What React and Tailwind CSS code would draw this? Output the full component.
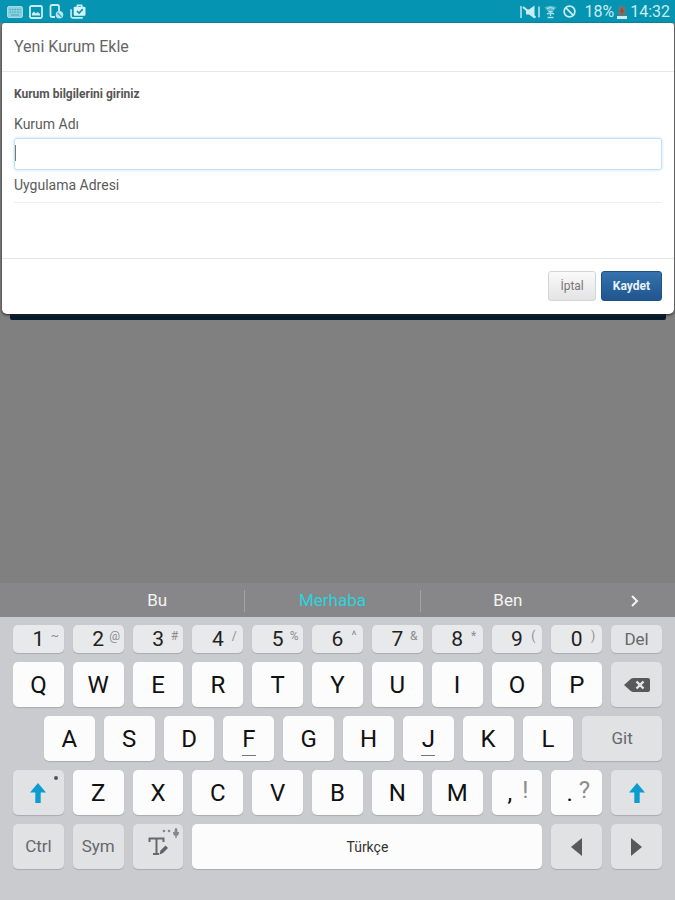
import React from "react";

const KEY_SHADOW = "shadow-[0_1px_1px_#a9abaf]";
const LETTER = `relative flex h-[45px] min-w-0 items-center justify-center rounded-[5px] bg-[#fcfcfc] text-2xl text-[#111] ${KEY_SHADOW}`;
const SPECIAL = `relative flex h-[45px] min-w-0 items-center justify-center rounded-[5px] bg-[#e0e2e4] text-[#66686b] ${KEY_SHADOW}`;
const ROW = "grid grid-cols-11 gap-[9px]";

const NUMBERS = [
  ["1", "~"], ["2", "@"], ["3", "#"], ["4", "/"], ["5", "%"],
  ["6", "^"], ["7", "&"], ["8", "*"], ["9", "("], ["0", ")"],
];

function StatusBar() {
  return (
    <header className="flex h-[23px] shrink-0 items-center justify-between bg-[#0594b2] pr-[5px] pl-[7px] text-[#c9edf3]">
      <div className="flex items-center gap-[6px]">
        <svg width="16" height="12" viewBox="0 0 16 12" aria-hidden="true">
          <rect x="0.5" y="0.5" width="15" height="11" rx="1.5" fill="#8bcfdd" stroke="#a5dbe6" />
          <path d="M2.5 3.5h11M2.5 6h11" stroke="#3ba9c0" strokeDasharray="1.5 1" />
          <path d="M4 9h8" stroke="#3ba9c0" />
        </svg>
        <svg width="14" height="14" viewBox="0 0 14 14" fill="none" aria-hidden="true">
          <rect x="1" y="1" width="12" height="12" rx="1.5" stroke="currentColor" strokeWidth="1.8" />
          <path d="M3 10.5V8.5l2-2 2 2 1.5-1.5L11 8.8v1.7z" fill="currentColor" />
        </svg>
        <svg width="15" height="15" viewBox="0 0 15 15" fill="none" aria-hidden="true">
          <path d="M6 13H3a1.500 1.500 0 0 1-1.500-1.500v-9A1.500 1.500 0 0 1 3 1h5.500A1.500 1.500 0 0 1 10 2.500V7" stroke="currentColor" strokeWidth="1.800" />
          <circle cx="10.500" cy="10.800" r="3.800" fill="#b5e6ee" />
          <path d="M8.500 8.800l4 4" stroke="#2a9fb8" strokeWidth="1.200" />
        </svg>
        <svg width="16" height="15" viewBox="0 0 15 14" fill="none" aria-hidden="true">
          <path d="M1 5v6.500A1.500 1.500 0 0 0 2.500 13H12" stroke="currentColor" strokeWidth="1.500" />
          <path d="M7 3V1.200h4V3" stroke="currentColor" strokeWidth="1.500" />
          <rect x="3.500" y="2.500" width="11" height="8.500" rx="1" fill="#d6f5f8" />
          <path d="M6.500 6.500l2 2 3.500-3.700" stroke="#0594b2" strokeWidth="1.500" />
        </svg>
      </div>
      <div className="flex items-center text-base leading-[23px]">
        <svg className="mr-[4px]" width="20" height="14" viewBox="0 0 20 14" fill="none" aria-hidden="true">
          <path d="M1 1v12M19 1.500v11" stroke="currentColor" strokeWidth="1.400" />
          <path d="M6 4.500h3l5.500-4v13L9 9.500H6z" fill="currentColor" />
          <path d="M3 2l12.500 10.500" stroke="currentColor" strokeWidth="2" />
        </svg>
        <svg className="mr-[6px]" width="13" height="14" viewBox="0 0 13 14" fill="none" aria-hidden="true">
          <path d="M.5 2.500Q6.500-1 12.500 2.500L8.500 7h-4z" fill="#5cbacd" />
          <path d="M3 3.500Q6.500 1.500 10 3.500M4.500 6.500h4" stroke="#b4e3ec" />
          <path d="M6.500 6v5M3 9l3.500-1.500L10 9M3.500 12.500h6" stroke="#a9dfe8" strokeWidth="1.500" />
        </svg>
        <svg className="mr-[8px]" width="13" height="13" viewBox="0 0 13 13" fill="none" stroke="currentColor" strokeWidth="1.700" aria-hidden="true">
          <circle cx="6.500" cy="6.500" r="5.400" />
          <path d="M2.700 2.700l7.600 7.600" />
        </svg>
        <span>18%</span>
        <svg className="mx-[3px]" width="10" height="14" viewBox="0 0 10 14" aria-hidden="true">
          <path d="M3.500 0h3v2H9v9H1V2h2.500z" fill="#557f86" />
          <path d="M5.500 1.500L2.500 7h2l-1 4L8 5.500H6z" fill="#b5431e" />
          <path d="M0 11h10v3H0z" fill="#c9edf3" />
        </svg>
        <span>14:32</span>
      </div>
    </header>
  );
}

function Dialog() {
  return (
    <section role="dialog" aria-labelledby="dialog-title" className="ml-[2px] mr-px">
      <form onSubmit={(e) => e.preventDefault()} className="relative rounded-b-[5px] rounded-t-[3px] bg-white text-[#5c5c5c] shadow-[0_1px_3px_#222]">
        <h1 id="dialog-title" className="border-b border-[#e8e8e8] px-3 pt-3 pb-3 text-base leading-6 text-[#666]">
          Yeni Kurum Ekle
        </h1>
        <div className="flex flex-col px-3 pt-3">
          <h2 className="text-xs leading-5 font-bold text-[#555]">Kurum bilgilerini giriniz</h2>
          <label htmlFor="name" className="mt-[10px] text-sm leading-5">Kurum Adı</label>
          <div className="relative mt-1">
            <input id="name" className="block h-8 w-full rounded-[3px] border border-[#c3e1f3] px-1 shadow-[0_0_3px_#b5dcf5] outline-none" />
            <span className="absolute top-[7px] left-px h-4 w-px bg-[#777]" />
          </div>
          <label htmlFor="address" className="mt-[5px] text-sm leading-5">Uygulama Adresi</label>
          <input id="address" className="mt-[7px] h-14 w-full border-t border-[#eee] outline-none" />
        </div>
        <footer className="flex justify-end gap-[5px] border-t border-[#e5e5e5] px-3 pt-3 pb-[13px] text-xs">
          <button type="button" className="h-[30px] rounded-[3px] border border-[#d5d5d5] bg-linear-to-b from-[#fafafa] to-[#e3e3e3] px-[11px] text-[#777]">
            İptal
          </button>
          <button type="submit" className="h-[30px] rounded-[3px] border border-[#1f5288] bg-linear-to-b from-[#3473ae] to-[#20558d] px-[11px] font-bold text-[#e8f1fa]">
            Kaydet
          </button>
        </footer>
      </form>
      <div className="mx-2 h-[6px] rounded-b-[2px] bg-[#07192c]" />
    </section>
  );
}

function Letter({ children, grow = false }) {
  const marked = children === "F" || children === "J";
  return (
    <button type="button" className={`${LETTER} ${grow ? "grow-51 basis-0" : ""}`}>
      {children}
      {marked && <span className="absolute bottom-[5px] h-px w-[14px] bg-[#777]" />}
    </button>
  );
}

function Shift({ dot = false }) {
  return (
    <button type="button" aria-label="Shift" className={SPECIAL}>
      <svg width="16" height="20" viewBox="0 0 16 20" aria-hidden="true">
        <path d="M8 0l8 9.500h-5.300V20H5.300V9.500H0z" fill="#0c9dd0" />
      </svg>
      {dot && <span className="absolute top-[6px] right-[6px] size-1 rounded-full bg-[#555]" />}
    </button>
  );
}

function Keyboard() {
  return (
    <section aria-label="Klavye" className="shrink-0">
      <div className="flex h-[34px] items-center bg-[#878789] pt-[2px] text-[17px] text-[#f4f4f4]">
        <div className="w-[70px]" />
        <button type="button" className="flex-1">Bu</button>
        <span className="h-[22px] w-px bg-[#a3a3a5]" />
        <button type="button" className="flex-1 text-[#2cd3dc]">Merhaba</button>
        <span className="h-[22px] w-px bg-[#a3a3a5]" />
        <button type="button" className="flex-1">Ben</button>
        <button type="button" aria-label="Daha fazla" className="flex w-20 justify-center">
          <svg width="8" height="12" viewBox="0 0 8 12" fill="none" stroke="currentColor" strokeWidth="2" aria-hidden="true">
            <path d="M1 1l5 5-5 5" />
          </svg>
        </button>
      </div>
      <div className="flex flex-col gap-[9px] bg-[#cacbcf] px-[13px] pt-2 pb-[31px]">
        <div className={ROW}>
          {NUMBERS.map(([n, alt]) => (
            <button key={n} type="button" className={`relative h-7 rounded-[5px] bg-[#e8e9eb] text-[21px] leading-7 text-[#222] ${KEY_SHADOW}`}>
              {n}
              <span className="absolute top-1 right-[3px] w-3 text-center text-xs leading-[14px] text-[#8b8d90]">{alt}</span>
            </button>
          ))}
          <button type="button" className={`h-7 rounded-[5px] bg-[#e3e4e6] text-[17px] leading-7 text-[#66686b] ${KEY_SHADOW}`}>Del</button>
        </div>
        <div className={ROW}>
          {[..."QWERTYUIOP"].map((c) => <Letter key={c}>{c}</Letter>)}
          <button type="button" aria-label="Sil" className={SPECIAL}>
            <svg width="26" height="14" viewBox="0 0 26 14" aria-hidden="true">
              <path d="M0 7l7-6.200Q8 0 9.500 0H24q2 0 2 2v10q0 2-2 2H9.500Q8 14 7 13.200z" fill="#58595b" />
              <path d="M12.500 3.500l7 7m0-7l-7 7" stroke="#e8e9eb" strokeWidth="2.400" />
            </svg>
          </button>
        </div>
        <div className="flex gap-[9px] pl-[31px]">
          {[..."ASDFGHJKL"].map((c) => <Letter key={c} grow>{c}</Letter>)}
          <button type="button" className={`${SPECIAL} grow-80 basis-0 text-[17px]`}>Git</button>
        </div>
        <div className={ROW}>
          <Shift dot />
          {[..."ZXCVBNM"].map((c) => <Letter key={c}>{c}</Letter>)}
          <button type="button" className={LETTER}>
            <span className="-ml-[14px]">,</span>
            <span className="absolute top-[6px] right-[14px] leading-7 text-[#8b8d90]">!</span>
          </button>
          <button type="button" className={LETTER}>
            <span className="-ml-[14px]">.</span>
            <span className="absolute top-[6px] right-3 leading-7 text-[#8b8d90]">?</span>
          </button>
          <Shift />
        </div>
        <div className={ROW}>
          <button type="button" className={`${SPECIAL} text-[17px]`}>Ctrl</button>
          <button type="button" className={`${SPECIAL} text-[17px]`}>Sym</button>
          <button type="button" aria-label="El yazısı" className={SPECIAL}>
            <svg width="20" height="19" viewBox="0 0 20 19" fill="none" aria-hidden="true">
              <path d="M1.500 5V1.500h14V5M8.500 1.500v15M5 17h6" stroke="#66686b" strokeWidth="2" />
              <path d="M11.500 17.500l1-4 5-5 2.500 2.500-5 5z" fill="#606265" />
            </svg>
            <svg className="absolute top-1 right-1" width="17" height="10" viewBox="0 0 17 10" fill="#85878a" aria-hidden="true">
              <circle cx="2" cy="3" r="1.300" />
              <circle cx="7" cy="3" r="1.300" />
              <path d="M11 4h1.500q0-4 1.500-4t1.500 4H17q0 4-3 4t-3-4z" />
              <path d="M13.300 7h1.400v3h-1.400z" />
            </svg>
          </button>
          <button type="button" className={`col-span-6 flex h-[45px] items-center justify-center rounded-[5px] bg-[#fcfcfc] text-sm text-[#333] ${KEY_SHADOW}`}>
            Türkçe
          </button>
          <button type="button" aria-label="Sola" className={SPECIAL}>
            <svg width="11" height="18" viewBox="0 0 11 18" aria-hidden="true"><path d="M0 9L11 0v18z" fill="#58595b" /></svg>
          </button>
          <button type="button" aria-label="Sağa" className={SPECIAL}>
            <svg width="11" height="18" viewBox="0 0 11 18" aria-hidden="true"><path d="M11 9L0 0v18z" fill="#58595b" /></svg>
          </button>
        </div>
      </div>
    </section>
  );
}

export default function App() {
  return (
    <main className="flex min-h-screen flex-col bg-[#808080] font-[Roboto,'Noto_Sans',sans-serif]">
      <StatusBar />
      <Dialog />
      <div className="flex-1" />
      <Keyboard />
    </main>
  );
}
